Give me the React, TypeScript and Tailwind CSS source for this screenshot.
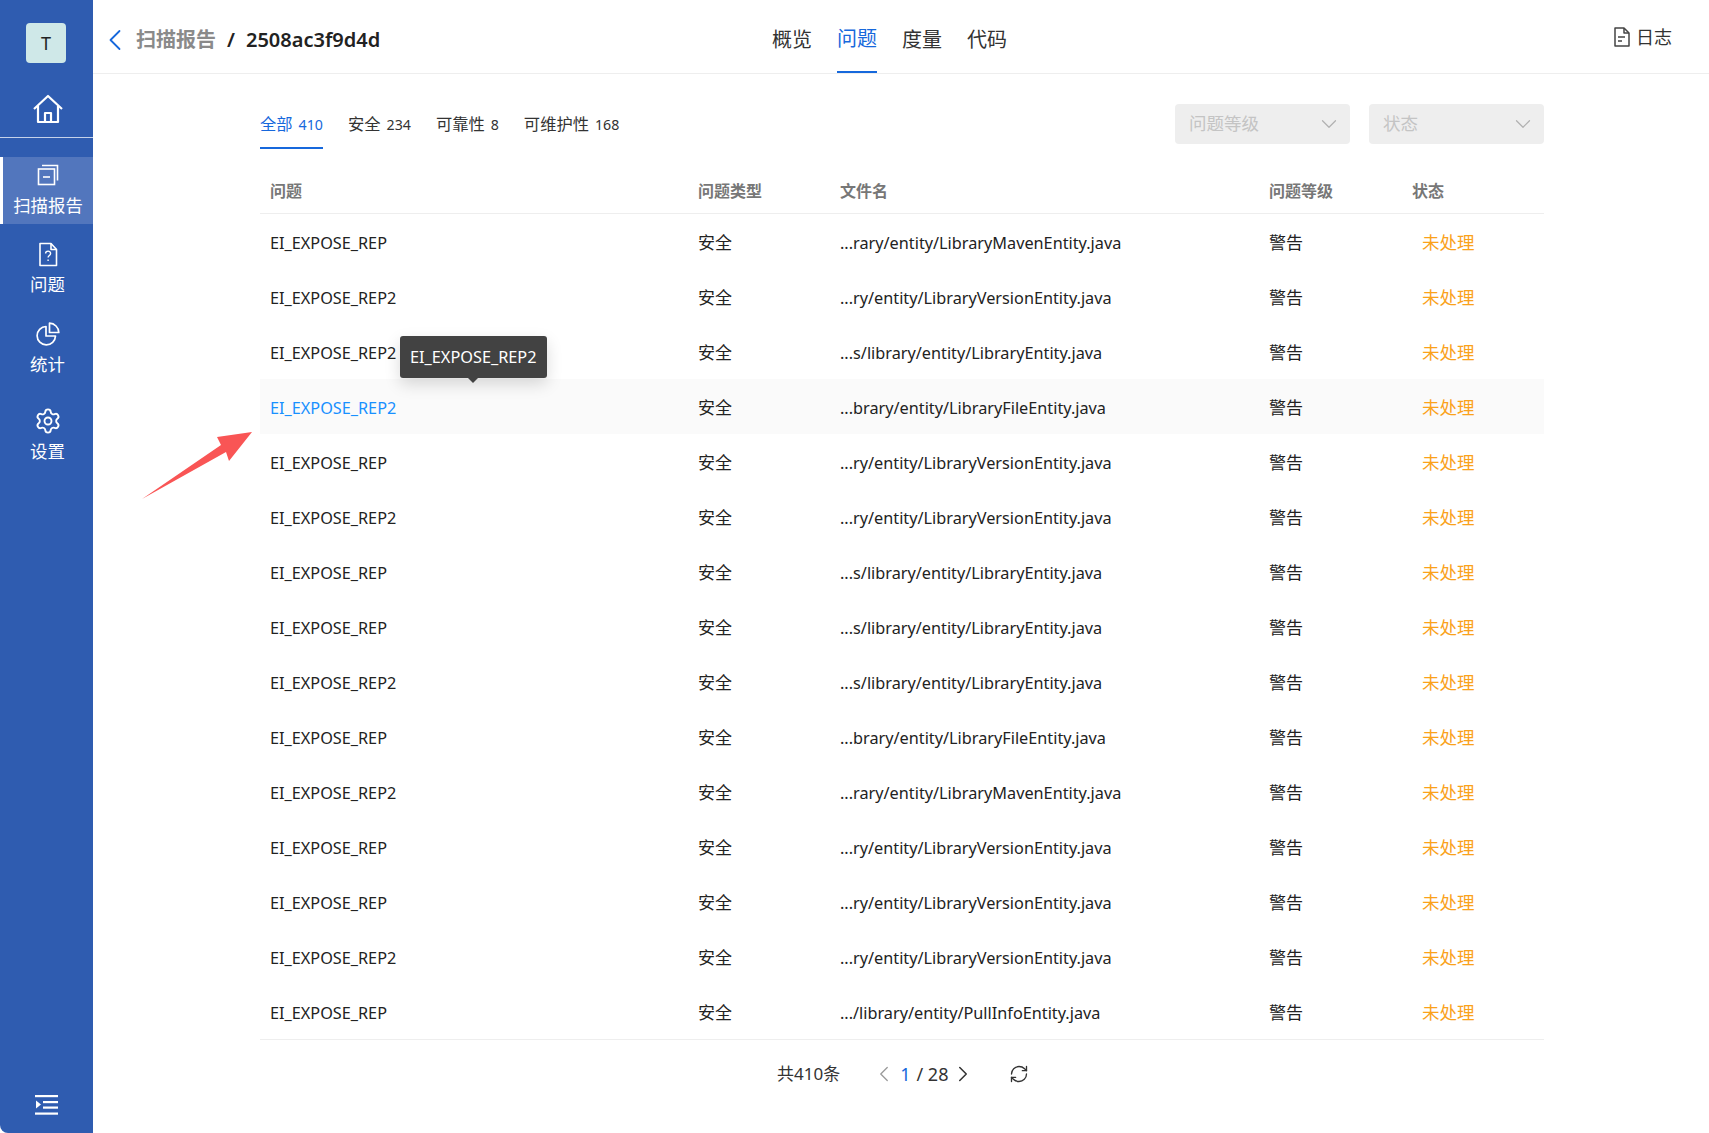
import { ChevronDown, ChevronLeft, ChevronRight, RefreshCw, Settings } from 'lucide-react';

type Row = {
  name: string;
  file: string;
};

const font = { fontFamily: '"Noto Sans", "Noto Sans CJK SC", sans-serif' };

const rows: Row[] = [
  { name: 'EI_EXPOSE_REP', file: '...rary/entity/LibraryMavenEntity.java' },
  { name: 'EI_EXPOSE_REP2', file: '...ry/entity/LibraryVersionEntity.java' },
  { name: 'EI_EXPOSE_REP2', file: '...s/library/entity/LibraryEntity.java' },
  { name: 'EI_EXPOSE_REP2', file: '...brary/entity/LibraryFileEntity.java' },
  { name: 'EI_EXPOSE_REP', file: '...ry/entity/LibraryVersionEntity.java' },
  { name: 'EI_EXPOSE_REP2', file: '...ry/entity/LibraryVersionEntity.java' },
  { name: 'EI_EXPOSE_REP', file: '...s/library/entity/LibraryEntity.java' },
  { name: 'EI_EXPOSE_REP', file: '...s/library/entity/LibraryEntity.java' },
  { name: 'EI_EXPOSE_REP2', file: '...s/library/entity/LibraryEntity.java' },
  { name: 'EI_EXPOSE_REP', file: '...brary/entity/LibraryFileEntity.java' },
  { name: 'EI_EXPOSE_REP2', file: '...rary/entity/LibraryMavenEntity.java' },
  { name: 'EI_EXPOSE_REP', file: '...ry/entity/LibraryVersionEntity.java' },
  { name: 'EI_EXPOSE_REP', file: '...ry/entity/LibraryVersionEntity.java' },
  { name: 'EI_EXPOSE_REP2', file: '...ry/entity/LibraryVersionEntity.java' },
  { name: 'EI_EXPOSE_REP', file: '.../library/entity/PullInfoEntity.java' }
];

const tabs = [
  { label: '全部', count: '410', active: true },
  { label: '安全', count: '234', active: false },
  { label: '可靠性', count: '8', active: false },
  { label: '可维护性', count: '168', active: false }
];

const HomeIcon = () => (
  <svg width="32" height="30" viewBox="0 0 32 30" fill="none" stroke="white" strokeWidth="2.2" strokeLinejoin="round">
    <path d="M2 15 16 2l14 13" />
    <path d="M6 12v16h20V12" />
    <path d="M13 28v-9h6v9" />
  </svg>
);

const ReportIcon = () => (
  <svg width="22" height="22" viewBox="0 0 22 22" fill="none" stroke="white" strokeWidth="1.6">
    <rect x="1.5" y="5" width="16" height="15.5" />
    <path d="M5 1.5h15.5v15" />
    <path d="M6 13h7" />
  </svg>
);

const QuestionIcon = () => (
  <svg width="20" height="25" viewBox="0 0 20 25" fill="none" stroke="white" strokeWidth="1.6" strokeLinejoin="round">
    <path d="M2 1.5h11l5.5 6v16H2z" />
    <path d="M13 1.5v6h5.5" />
    <path d="M7.6 11.5c0-3.2 5-3.2 5 0 0 2-2.5 2-2.5 4" strokeWidth="1.4" />
    <path d="M10.1 17.5v1.6" strokeWidth="1.4" />
  </svg>
);

const ChartIcon = () => (
  <svg width="24" height="24" viewBox="0 0 24 24" fill="none" stroke="white" strokeWidth="1.7" strokeLinejoin="round">
    <path d="M10 4.5a9.2 9.2 0 1 0 9.5 9.5H10z" />
    <path d="M13.5 1.2a9.5 9.5 0 0 1 9.3 9.3h-9.3z" />
  </svg>
);

const CollapseIcon = () => (
  <svg width="24" height="21" viewBox="0 0 24 21" fill="white">
    <rect x="0" y="1" width="23" height="2.2" />
    <rect x="8" y="7" width="15" height="2.2" />
    <rect x="8" y="12.5" width="15" height="2.2" />
    <rect x="0" y="18.5" width="23" height="2.2" />
    <path d="M1 6.5v8l5-4z" />
  </svg>
);

const LogIcon = () => (
  <svg width="16" height="20" viewBox="0 0 16 20" fill="none" stroke="#444" strokeWidth="1.5" strokeLinejoin="round">
    <path d="M1 1h9l5 5v13H1z" />
    <path d="M10 1v5h5" />
    <path d="M4 10h7M4 14h4" />
  </svg>
);

const NavItem = ({ icon, label, active }: { icon: React.ReactNode; label: string; active?: boolean }) => (
  <div
    className={`flex h-[67px] flex-col items-center gap-[8px] text-[17.4px]/[20px] text-white ${
      active ? 'justify-center border-l-[3px] border-white bg-[#5276bd] pb-[4px]' : 'justify-start pl-[2px]'
    }`}
  >
    <div className="flex h-[24px] items-center justify-center">{icon}</div>
    <span>{label}</span>
  </div>
);

const Sidebar = () => (
  <aside className="flex h-full w-[93px] shrink-0 flex-col rounded-bl-[8px] bg-[#2f5cb0]">
    <div className="flex justify-center pr-[1px] pt-[23px]">
      <div className="flex h-[40px] w-[40px] items-center justify-center rounded-[4px] bg-[#cfe8e8] text-[18px] text-[#222]">
        T
      </div>
    </div>
    <div className="flex justify-center pl-[2px] pt-[31px]">
      <HomeIcon />
    </div>
    <div className="mt-[13px] h-px bg-[#c5d2ea]" />
    <div className="mt-[19px] flex flex-col">
      <NavItem icon={<ReportIcon />} label="扫描报告" active />
      <div className="mt-[18px]">
        <NavItem icon={<QuestionIcon />} label="问题" />
      </div>
      <div className="mt-[13px]">
        <NavItem icon={<ChartIcon />} label="统计" />
      </div>
      <div className="mt-[20px]">
        <NavItem icon={<Settings size={28} strokeWidth={1.6} />} label="设置" />
      </div>
    </div>
    <div className="mt-auto flex justify-center pb-[18px] pl-[1px]">
      <CollapseIcon />
    </div>
  </aside>
);

const Header = () => (
  <header className="relative flex h-[74px] shrink-0 items-center border-b border-[#eeeeee] pl-[4px] pr-[37px]">
    <div className="flex items-center pt-[6px]">
      <ChevronLeft size={36} strokeWidth={1.2} className="text-[#1668dc]" />
      <div className="ml-[3px] flex items-center text-[20px] font-semibold">
        <span className="text-[#8a8a8a]">扫描报告</span>
        <span className="mx-[11px] text-[#222]">/</span>
        <span className="text-[#222]">2508ac3f9d4d</span>
      </div>
    </div>
    <nav className="absolute left-[679px] top-0 flex h-[73px] gap-[25px] pt-[6px] text-[20px] text-[#333]">
      <span className="flex items-center">概览</span>
      <span className="flex items-center border-b-2 border-[#1668dc] text-[#1668dc]">问题</span>
      <span className="flex items-center">度量</span>
      <span className="flex items-center">代码</span>
    </nav>
    <div className="ml-auto flex items-center gap-[6px] pt-[1px] text-[18px] text-[#333]">
      <LogIcon />
      <span>日志</span>
    </div>
  </header>
);

const FilterSelect = ({ label }: { label: string }) => (
  <div className="flex h-[40px] w-[175px] items-center justify-between rounded-[4px] bg-[#eeeeee] pl-[14px] pr-[8px] text-[17.5px] text-[#c4c4c4]">
    <span className="pb-[1px]">{label}</span>
    <ChevronDown size={26} strokeWidth={1.1} className="text-[#b0b0b0]" />
  </div>
);

const Toolbar = () => (
  <div className="flex h-[100px] items-start justify-between pt-[30px]">
    <div className="flex gap-[25px]">
      {tabs.map(tab => (
        <div
          key={tab.label}
          className={`flex h-[45px] items-start gap-[6px] pt-[9px] text-[16.3px]/[23px] ${
            tab.active ? 'border-b-2 border-[#1668dc] text-[#1668dc]' : 'text-[#333]'
          }`}
        >
          <span>{tab.label}</span>
          <span className="text-[14.2px]/[23px]">{tab.count}</span>
        </div>
      ))}
    </div>
    <div className="flex gap-[19px]">
      <FilterSelect label="问题等级" />
      <FilterSelect label="状态" />
    </div>
  </div>
);

const gridCols = 'grid grid-cols-[428px_142px_429px_143px_1fr] items-center';

const IssueTable = () => (
  <div className="border-b border-[#eeeeee]">
    <div className={`${gridCols} h-[40px] border-b border-[#eeeeee] pb-[6px] text-[16px] font-semibold text-[#777]`}>
      <span className="pl-[10px]">问题</span>
      <span className="pl-[10px]">问题类型</span>
      <span className="pl-[10px]">文件名</span>
      <span className="pl-[10px]">问题等级</span>
      <span className="pl-[10px]">状态</span>
    </div>
    {rows.map((row, index) => (
      <div key={index} className={`${gridCols} h-[55px] pt-[1px] text-[16.25px] text-[#222] ${index === 3 ? 'bg-[#fafafa]' : ''}`}>
        <span className={`pl-[10px] pt-[2px] ${index === 3 ? 'text-[#1890ff]' : ''}`}>{row.name}</span>
        <span className="pl-[10px] pt-[1px] text-[17px]">安全</span>
        <span className="pl-[10px] pt-[2px]">{row.file}</span>
        <span className="pl-[10px] pt-[1px] text-[17px]">警告</span>
        <span className="pl-[20px] text-[17.5px] text-[#faa21b]">未处理</span>
      </div>
    ))}
  </div>
);

const Pagination = () => (
  <div className="flex h-[68px] items-center pl-[517px] text-[17px] text-[#333]">
    <span>共410条</span>
    <ChevronLeft size={26} strokeWidth={1.2} className="ml-[31px] text-[#999]" />
    <span className="ml-[3px] text-[18px] text-[#1668dc]">1</span>
    <span className="ml-[6px] text-[18px]">/ 28</span>
    <ChevronRight size={26} strokeWidth={1.4} className="ml-[2px] text-[#333]" />
    <RefreshCw size={20} strokeWidth={1.6} className="ml-[33px] text-[#333]" />
  </div>
);

export default function App() {
  return (
    <div className="relative flex h-[1133px] w-full overflow-hidden bg-white" style={font}>
      <Sidebar />
      <main className="flex min-w-0 flex-1 flex-col">
        <Header />
        <div className="px-[165px] pl-[167px]">
          <Toolbar />
          <IssueTable />
          <Pagination />
        </div>
      </main>

      <div className="absolute left-[400px] top-[336px] rounded-[3px] bg-[#424242] px-[10px] py-[9px] text-[16.3px]/[24px] text-white shadow-[0_6px_16px_rgba(0,0,0,0.15)]">
        EI_EXPOSE_REP2
        <div className="absolute left-1/2 top-full h-0 w-0 -translate-x-1/2 border-x-[5px] border-t-[5px] border-x-transparent border-t-[#424242]" />
      </div>

      <svg className="absolute left-[140px] top-[428px]" width="116" height="72" viewBox="140 428 116 72">
        <polygon points="252,432 229,461 226,452 142,499 221,445 217,437" fill="#f95555" />
      </svg>
    </div>
  );
}
